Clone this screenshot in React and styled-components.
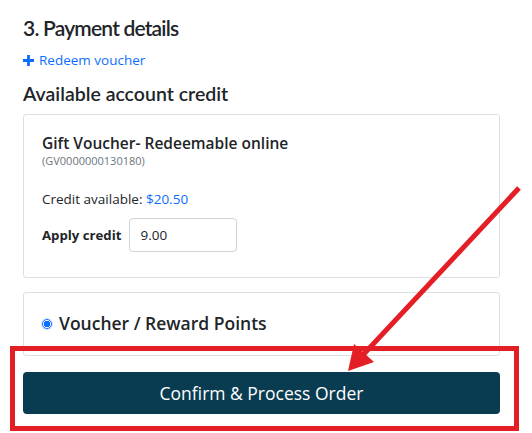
import React from 'react';
import styled, { createGlobalStyle } from 'styled-components';

const GlobalStyle = createGlobalStyle`
  html, body {
    margin: 0;
    padding: 0;
    background: #ffffff;
  }
  body {
    font-family: "Open Sans", "Noto Sans", "Liberation Sans", sans-serif;
    color: #212529;
  }
`;

const Page = styled.div`
  position: relative;
  width: 532px;
  height: 433px;
  overflow: hidden;
  padding: 12px 32px 0 23px;
  box-sizing: border-box;
`;

const Heading = styled.h3`
  margin: 0;
  font-family: Lato, "Open Sans", sans-serif;
  font-size: 21px;
  font-weight: 600;
  line-height: 31px;
  letter-spacing: -0.8px;
`;

const LinkRow = styled.a`
  display: flex;
  align-items: center;
  gap: 5px;
  margin-top: 7px;
  font-size: 13.5px;
  line-height: 20px;
  color: #0d6efd;
  text-decoration: none;
`;

const SubHeading = styled.h4`
  margin: 12px 0 0;
  font-family: Lato, "Open Sans", sans-serif;
  font-size: 19.5px;
  font-weight: 600;
  line-height: 24px;
`;

const Card = styled.div`
  margin-top: ${p => p.$top}px;
  border: 1px solid #dcdfe3;
  border-radius: 3px;
  padding: ${p => p.$pad};
  height: ${p => p.$height}px;
  box-sizing: border-box;
`;

const VoucherTitle = styled.div`
  font-size: 15.5px;
  font-weight: 600;
  line-height: 20px;
`;

const VoucherCode = styled.div`
  font-size: 11px;
  color: #6c757d;
  line-height: 16px;
`;

const CreditLine = styled.div`
  margin-top: 20px;
  font-size: 13.5px;
  line-height: 20px;
`;

const Amount = styled.span`
  color: #0d6efd;
`;

const ApplyRow = styled.div`
  display: flex;
  align-items: center;
  gap: 8px;
  margin-top: 9px;
`;

const ApplyLabel = styled.label`
  font-size: 13.2px;
  font-weight: 700;
`;

const CreditInput = styled.input`
  width: 108px;
  height: 34px;
  box-sizing: border-box;
  border: 1px solid #ced4da;
  border-radius: 4px;
  padding: 0 10px;
  font-family: inherit;
  font-size: 13.5px;
  color: #212529;
`;

const RadioRow = styled.label`
  display: flex;
  align-items: center;
  gap: 7px;
  font-size: 17.5px;
  font-weight: 600;
  line-height: 24px;
`;

const Radio = styled.span`
  width: 10px;
  height: 10px;
  border-radius: 50%;
  border: 1px solid #0d6efd;
  background: radial-gradient(circle, #0d6efd 0 3px, #ffffff 3.5px);
  box-sizing: border-box;
  position: relative;
  top: 1px;
  box-shadow: 0 0 0 1px #cfe2ff;
`;

const ConfirmButton = styled.button`
  display: block;
  width: 100%;
  height: 42px;
  margin-top: 16px;
  border: none;
  border-radius: 4px;
  background: #093c51;
  color: #ffffff;
  font-family: inherit;
  font-size: 17.5px;
  font-weight: 400;
  cursor: pointer;
`;

const Highlight = styled.div`
  position: absolute;
  left: 10px;
  top: 346px;
  width: 509px;
  height: 85px;
  border: 5px solid #e41e25;
  box-sizing: border-box;
  pointer-events: none;
`;

const Arrow = styled.svg`
  position: absolute;
  left: 0;
  top: 0;
  pointer-events: none;
`;

export default function App() {
  return (
    <>
      <GlobalStyle />
      <Page>
        <Heading>3. Payment details</Heading>
        <LinkRow href="#">
          <svg width="11" height="11" viewBox="0 0 11 11">
            <path d="M5.5 0v11M0 5.5h11" stroke="#0d6efd" strokeWidth="2.8" />
          </svg>
          Redeem voucher
        </LinkRow>
        <SubHeading>Available account credit</SubHeading>
        <Card $top={8} $height={164} $pad="18px 18px">
          <VoucherTitle>Gift Voucher- Redeemable online</VoucherTitle>
          <VoucherCode>(GV0000000130180)</VoucherCode>
          <CreditLine>
            Credit available: <Amount>$20.50</Amount>
          </CreditLine>
          <ApplyRow>
            <ApplyLabel>Apply credit</ApplyLabel>
            <CreditInput defaultValue="9.00" />
          </ApplyRow>
        </Card>
        <Card $top={14} $height={64} $pad="18px 18px">
          <RadioRow>
            <Radio />
            Voucher / Reward Points
          </RadioRow>
        </Card>
        <ConfirmButton>Confirm &amp; Process Order</ConfirmButton>
        <Highlight />
        <Arrow width="532" height="433" viewBox="0 0 532 433">
          <line x1="519" y1="188" x2="362" y2="356" stroke="#e41e25" strokeWidth="5" />
          <polygon points="348,371 354,344 374,362" fill="#e41e25" />
        </Arrow>
      </Page>
    </>
  );
}
